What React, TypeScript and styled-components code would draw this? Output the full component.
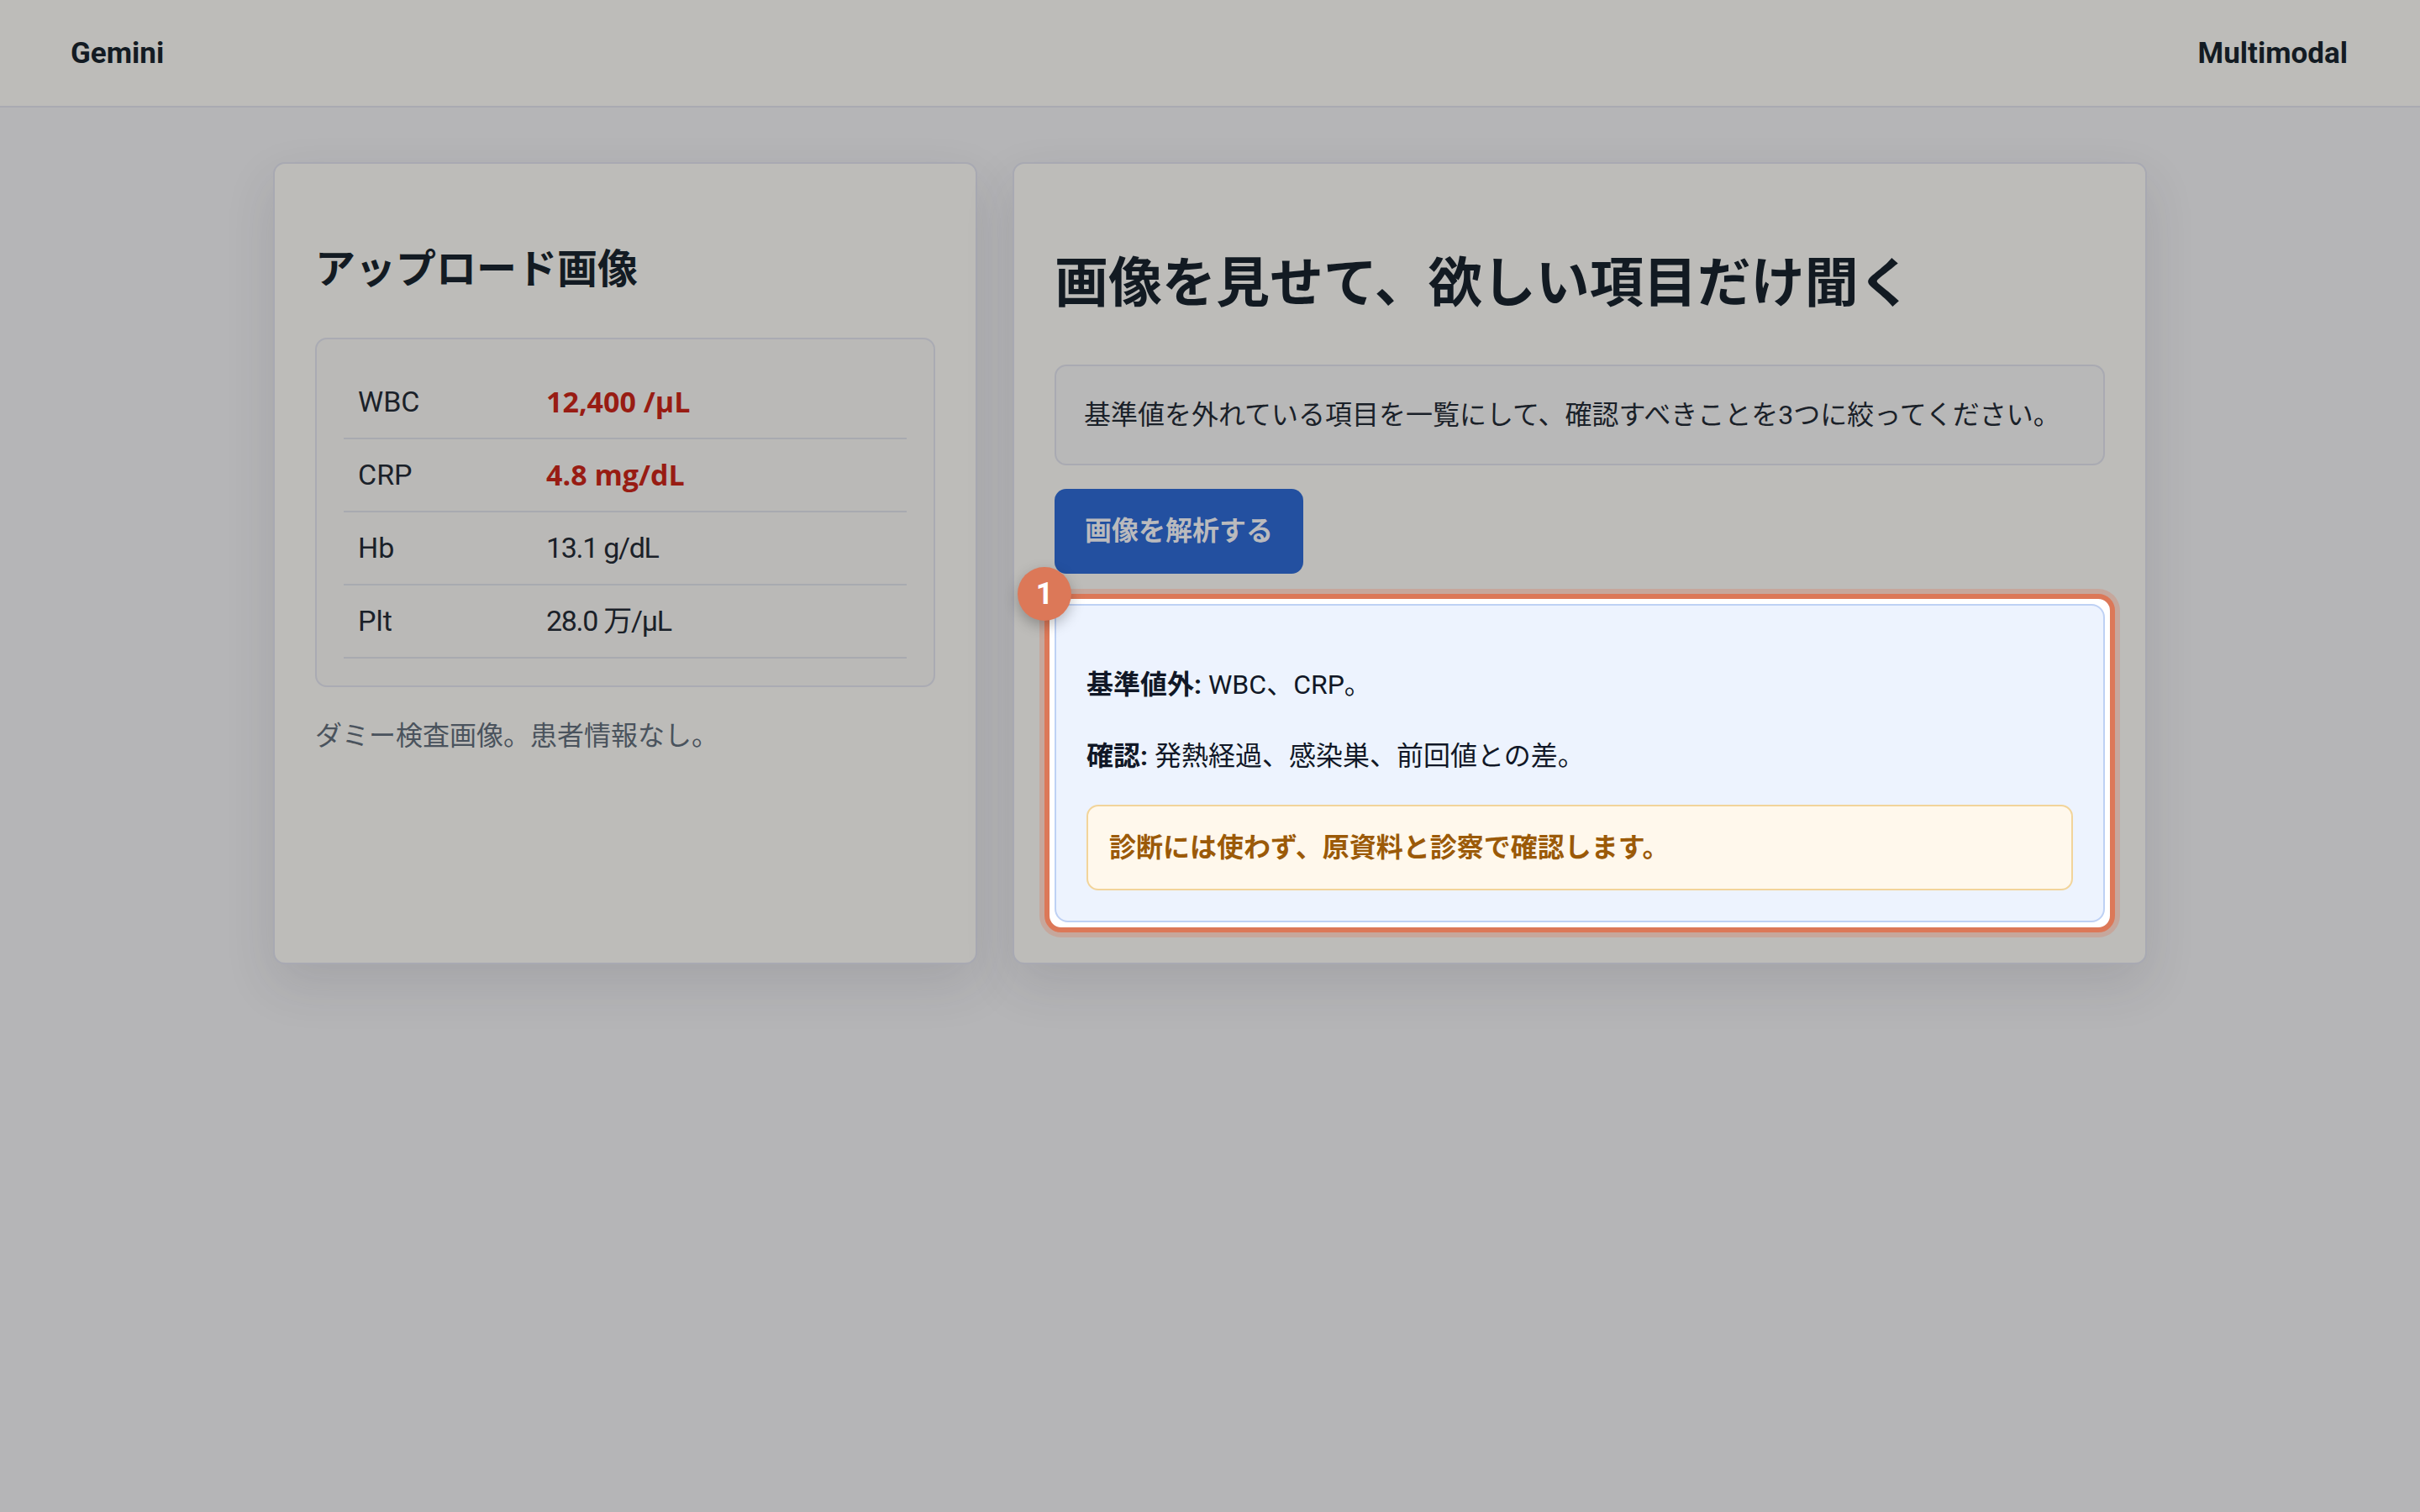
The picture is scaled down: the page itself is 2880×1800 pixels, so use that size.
import styled, { createGlobalStyle } from "styled-components";

const GlobalStyle = createGlobalStyle`
  * { box-sizing: border-box; }
  html, body {
    margin: 0;
    padding: 0;
    background: #b5b5b7;
  }
  body {
    min-height: 100vh;
    font-family: Roboto, "Noto Sans CJK JP", sans-serif;
    color: #131b23;
  }
`;

const Header = styled.header`
  height: 128px;
  padding: 0 86px 0 84px;
  display: flex;
  align-items: center;
  justify-content: space-between;
  background: #bdbcb9;
  border-bottom: 2px solid #a9aab2;
`;

const Brand = styled.div`
  font-size: 35px;
  font-weight: 700;
  color: #131b23;
`;

const Main = styled.main`
  display: grid;
  grid-template-columns: 838px 1350px;
  justify-content: center;
  gap: 42px;
  padding-top: 65px;
`;

const Card = styled.section`
  padding: 48px;
  background: #bdbcb9;
  border: 2px solid #a8a9b2;
  border-radius: 14px;
  box-shadow: 0 24px 60px rgba(40, 40, 60, 0.12);
`;

const CardTitle = styled.h2`
  margin: 47px 0 50px;
  font-size: 48px;
  line-height: 62px;
  font-weight: 700;
  color: #131b23;
`;

const PageTitle = styled.h1`
  margin: 53px 0 55px;
  font-size: 64px;
  line-height: 83px;
  font-weight: 700;
  color: #121a22;
`;

const TableBox = styled.div`
  padding: 32px;
  background: #bab9b7;
  border: 2px solid #aaabb3;
  border-radius: 14px;
`;

const Row = styled.div`
  display: grid;
  grid-template-columns: 224px 1fr;
  border-bottom: 2px solid #a8aab0;
`;

const Label = styled.div`
  padding: 17px;
  font-size: 34px;
  line-height: 51px;
  color: #1a2129;
`;

const Value = styled.div<{ $alert?: boolean }>`
  padding: 17px;
  font-family: ${(p) =>
    p.$alert
      ? `"Open Sans", "Noto Sans CJK JP", sans-serif`
      : `Roboto, "Noto Sans CJK JP", sans-serif`};
  font-size: 34px;
  line-height: 51px;
  letter-spacing: ${(p) => (p.$alert ? "0" : "-1.3px")};
  font-weight: ${(p) => (p.$alert ? 700 : 400)};
  color: ${(p) => (p.$alert ? "#981c13" : "#1a2129")};
`;

const Caption = styled.p`
  margin: 34px 0 0;
  font-size: 32px;
  line-height: 48px;
  color: #4a535d;
`;

const Prompt = styled.div`
  padding: 34px 33px;
  font-size: 32px;
  line-height: 48px;
  color: #1a2129;
  background: #b8b8b8;
  border: 2px solid #a9aab2;
  border-radius: 14px;
`;

const AnalyzeButton = styled.button`
  display: block;
  margin-top: 28px;
  padding: 26px 36px 27px;
  font-family: inherit;
  font-size: 32px;
  line-height: 48px;
  font-weight: 700;
  color: #bababd;
  background: #2350a0;
  border: none;
  border-radius: 14px;
`;

const Highlight = styled.div`
  position: relative;
  margin: 24px -12px -12px;
  padding: 6px;
  background: #ffffff;
  border: 6px solid #dc7858;
  border-radius: 20px;
  box-shadow: 0 0 0 6px rgba(220, 120, 88, 0.3);
`;

const Badge = styled.div`
  position: absolute;
  left: -38px;
  top: -38px;
  width: 64px;
  height: 64px;
  display: flex;
  align-items: center;
  justify-content: center;
  border-radius: 50%;
  background: #dc7858;
  color: #ffffff;
  font-family: Roboto, sans-serif;
  font-size: 36px;
  font-weight: 700;
  box-shadow: 0 6px 16px rgba(0, 0, 0, 0.25);
`;

const ResultBox = styled.div`
  padding: 67px 36px 36px;
  background: #edf3fe;
  border: 2px solid #bed1f4;
  border-radius: 16px;
  font-size: 32px;
  line-height: 54px;
  color: #111827;
`;

const ResultLine = styled.p`
  margin: 0 0 31px;
`;

const Warning = styled.div`
  padding: 25px;
  font-size: 32px;
  line-height: 48px;
  font-weight: 700;
  color: #9b5a08;
  background: #fff8ec;
  border: 2px solid #f2d49a;
  border-radius: 14px;
`;

const labs = [
  { name: "WBC", value: "12,400 /µL", alert: true },
  { name: "CRP", value: "4.8 mg/dL", alert: true },
  { name: "Hb", value: "13.1 g/dL", alert: false },
  { name: "Plt", value: "28.0 万/µL", alert: false },
];

export default function App() {
  return (
    <>
      <GlobalStyle />
      <Header>
        <Brand>Gemini</Brand>
        <Brand>Multimodal</Brand>
      </Header>
      <Main>
        <Card>
          <CardTitle>アップロード画像</CardTitle>
          <TableBox>
            {labs.map((lab) => (
              <Row key={lab.name}>
                <Label>{lab.name}</Label>
                <Value $alert={lab.alert}>{lab.value}</Value>
              </Row>
            ))}
          </TableBox>
          <Caption>ダミー検査画像。患者情報なし。</Caption>
        </Card>
        <Card>
          <PageTitle>画像を見せて、欲しい項目だけ聞く</PageTitle>
          <Prompt>
            基準値を外れている項目を一覧にして、確認すべきことを3つに絞ってください。
          </Prompt>
          <AnalyzeButton>画像を解析する</AnalyzeButton>
          <Highlight>
            <Badge>1</Badge>
            <ResultBox>
              <ResultLine>
                <strong>基準値外:</strong> WBC、CRP。
              </ResultLine>
              <ResultLine>
                <strong>確認:</strong> 発熱経過、感染巣、前回値との差。
              </ResultLine>
              <Warning>診断には使わず、原資料と診察で確認します。</Warning>
            </ResultBox>
          </Highlight>
        </Card>
      </Main>
    </>
  );
}
